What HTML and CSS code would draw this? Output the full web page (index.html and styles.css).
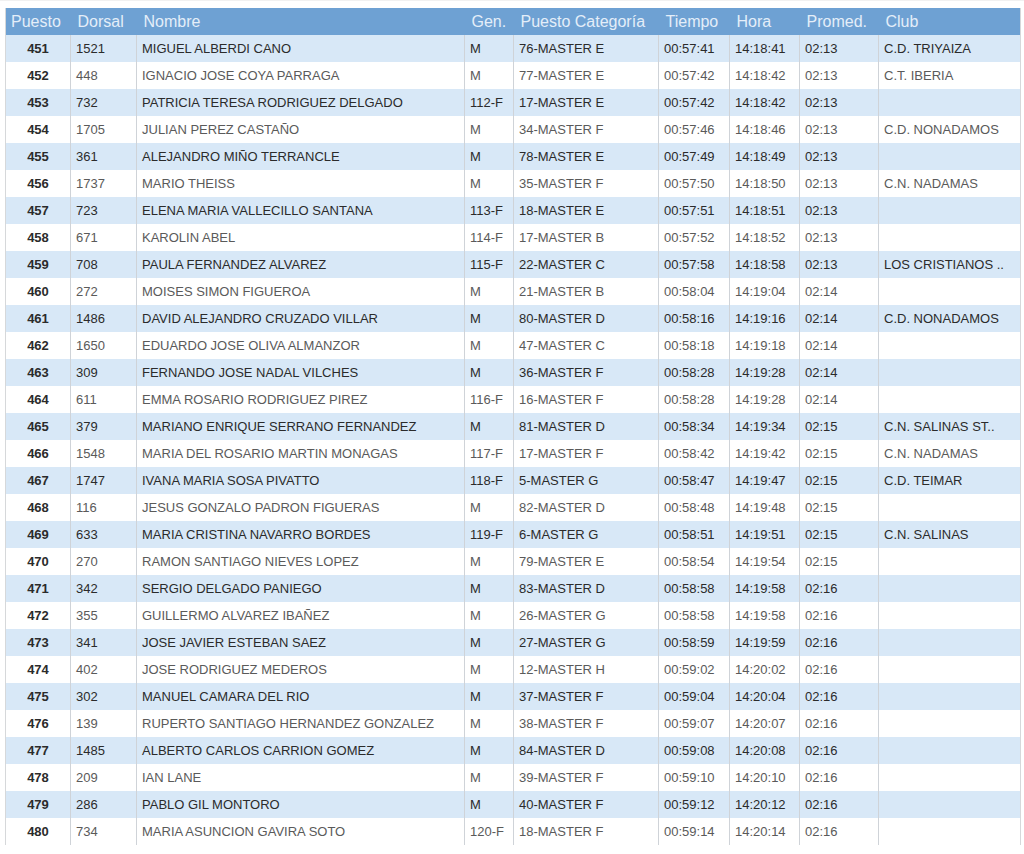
FILE: index.html
```html
<!DOCTYPE html>
<html lang="es">
<head>
<meta charset="utf-8">
<title>Clasificación</title>
<link rel="stylesheet" href="styles.css">
</head>
<body>
<div class="wrap">
<table class="results">
<colgroup>
<col class="c-pos"><col class="c-dor"><col class="c-nom"><col class="c-gen"><col class="c-cat"><col class="c-tie"><col class="c-hor"><col class="c-pro"><col class="c-club">
</colgroup>
<thead>
<tr><th class="h-pos">Puesto</th><th>Dorsal</th><th>Nombre</th><th>Gen.</th><th>Puesto Categoría</th><th>Tiempo</th><th>Hora</th><th>Promed.</th><th>Club</th></tr>
</thead>
<tbody>
<tr><td class="pos">451</td><td>1521</td><td>MIGUEL ALBERDI CANO</td><td>M</td><td>76-MASTER E</td><td>00:57:41</td><td>14:18:41</td><td>02:13</td><td>C.D. TRIYAIZA</td></tr>
<tr><td class="pos">452</td><td>448</td><td>IGNACIO JOSE COYA PARRAGA</td><td>M</td><td>77-MASTER E</td><td>00:57:42</td><td>14:18:42</td><td>02:13</td><td>C.T. IBERIA</td></tr>
<tr><td class="pos">453</td><td>732</td><td>PATRICIA TERESA RODRIGUEZ DELGADO</td><td>112-F</td><td>17-MASTER E</td><td>00:57:42</td><td>14:18:42</td><td>02:13</td><td></td></tr>
<tr><td class="pos">454</td><td>1705</td><td>JULIAN PEREZ CASTAÑO</td><td>M</td><td>34-MASTER F</td><td>00:57:46</td><td>14:18:46</td><td>02:13</td><td>C.D. NONADAMOS</td></tr>
<tr><td class="pos">455</td><td>361</td><td>ALEJANDRO MIÑO TERRANCLE</td><td>M</td><td>78-MASTER E</td><td>00:57:49</td><td>14:18:49</td><td>02:13</td><td></td></tr>
<tr><td class="pos">456</td><td>1737</td><td>MARIO THEISS</td><td>M</td><td>35-MASTER F</td><td>00:57:50</td><td>14:18:50</td><td>02:13</td><td>C.N. NADAMAS</td></tr>
<tr><td class="pos">457</td><td>723</td><td>ELENA MARIA VALLECILLO SANTANA</td><td>113-F</td><td>18-MASTER E</td><td>00:57:51</td><td>14:18:51</td><td>02:13</td><td></td></tr>
<tr><td class="pos">458</td><td>671</td><td>KAROLIN ABEL</td><td>114-F</td><td>17-MASTER B</td><td>00:57:52</td><td>14:18:52</td><td>02:13</td><td></td></tr>
<tr><td class="pos">459</td><td>708</td><td>PAULA FERNANDEZ ALVAREZ</td><td>115-F</td><td>22-MASTER C</td><td>00:57:58</td><td>14:18:58</td><td>02:13</td><td>LOS CRISTIANOS ..</td></tr>
<tr><td class="pos">460</td><td>272</td><td>MOISES SIMON FIGUEROA</td><td>M</td><td>21-MASTER B</td><td>00:58:04</td><td>14:19:04</td><td>02:14</td><td></td></tr>
<tr><td class="pos">461</td><td>1486</td><td>DAVID ALEJANDRO CRUZADO VILLAR</td><td>M</td><td>80-MASTER D</td><td>00:58:16</td><td>14:19:16</td><td>02:14</td><td>C.D. NONADAMOS</td></tr>
<tr><td class="pos">462</td><td>1650</td><td>EDUARDO JOSE OLIVA ALMANZOR</td><td>M</td><td>47-MASTER C</td><td>00:58:18</td><td>14:19:18</td><td>02:14</td><td></td></tr>
<tr><td class="pos">463</td><td>309</td><td>FERNANDO JOSE NADAL VILCHES</td><td>M</td><td>36-MASTER F</td><td>00:58:28</td><td>14:19:28</td><td>02:14</td><td></td></tr>
<tr><td class="pos">464</td><td>611</td><td>EMMA ROSARIO RODRIGUEZ PIREZ</td><td>116-F</td><td>16-MASTER F</td><td>00:58:28</td><td>14:19:28</td><td>02:14</td><td></td></tr>
<tr><td class="pos">465</td><td>379</td><td>MARIANO ENRIQUE SERRANO FERNANDEZ</td><td>M</td><td>81-MASTER D</td><td>00:58:34</td><td>14:19:34</td><td>02:15</td><td>C.N. SALINAS ST..</td></tr>
<tr><td class="pos">466</td><td>1548</td><td>MARIA DEL ROSARIO MARTIN MONAGAS</td><td>117-F</td><td>17-MASTER F</td><td>00:58:42</td><td>14:19:42</td><td>02:15</td><td>C.N. NADAMAS</td></tr>
<tr><td class="pos">467</td><td>1747</td><td>IVANA MARIA SOSA PIVATTO</td><td>118-F</td><td>5-MASTER G</td><td>00:58:47</td><td>14:19:47</td><td>02:15</td><td>C.D. TEIMAR</td></tr>
<tr><td class="pos">468</td><td>116</td><td>JESUS GONZALO PADRON FIGUERAS</td><td>M</td><td>82-MASTER D</td><td>00:58:48</td><td>14:19:48</td><td>02:15</td><td></td></tr>
<tr><td class="pos">469</td><td>633</td><td>MARIA CRISTINA NAVARRO BORDES</td><td>119-F</td><td>6-MASTER G</td><td>00:58:51</td><td>14:19:51</td><td>02:15</td><td>C.N. SALINAS</td></tr>
<tr><td class="pos">470</td><td>270</td><td>RAMON SANTIAGO NIEVES LOPEZ</td><td>M</td><td>79-MASTER E</td><td>00:58:54</td><td>14:19:54</td><td>02:15</td><td></td></tr>
<tr><td class="pos">471</td><td>342</td><td>SERGIO DELGADO PANIEGO</td><td>M</td><td>83-MASTER D</td><td>00:58:58</td><td>14:19:58</td><td>02:16</td><td></td></tr>
<tr><td class="pos">472</td><td>355</td><td>GUILLERMO ALVAREZ IBAÑEZ</td><td>M</td><td>26-MASTER G</td><td>00:58:58</td><td>14:19:58</td><td>02:16</td><td></td></tr>
<tr><td class="pos">473</td><td>341</td><td>JOSE JAVIER ESTEBAN SAEZ</td><td>M</td><td>27-MASTER G</td><td>00:58:59</td><td>14:19:59</td><td>02:16</td><td></td></tr>
<tr><td class="pos">474</td><td>402</td><td>JOSE RODRIGUEZ MEDEROS</td><td>M</td><td>12-MASTER H</td><td>00:59:02</td><td>14:20:02</td><td>02:16</td><td></td></tr>
<tr><td class="pos">475</td><td>302</td><td>MANUEL CAMARA DEL RIO</td><td>M</td><td>37-MASTER F</td><td>00:59:04</td><td>14:20:04</td><td>02:16</td><td></td></tr>
<tr><td class="pos">476</td><td>139</td><td>RUPERTO SANTIAGO HERNANDEZ GONZALEZ</td><td>M</td><td>38-MASTER F</td><td>00:59:07</td><td>14:20:07</td><td>02:16</td><td></td></tr>
<tr><td class="pos">477</td><td>1485</td><td>ALBERTO CARLOS CARRION GOMEZ</td><td>M</td><td>84-MASTER D</td><td>00:59:08</td><td>14:20:08</td><td>02:16</td><td></td></tr>
<tr><td class="pos">478</td><td>209</td><td>IAN LANE</td><td>M</td><td>39-MASTER F</td><td>00:59:10</td><td>14:20:10</td><td>02:16</td><td></td></tr>
<tr><td class="pos">479</td><td>286</td><td>PABLO GIL MONTORO</td><td>M</td><td>40-MASTER F</td><td>00:59:12</td><td>14:20:12</td><td>02:16</td><td></td></tr>
<tr><td class="pos">480</td><td>734</td><td>MARIA ASUNCION GAVIRA SOTO</td><td>120-F</td><td>18-MASTER F</td><td>00:59:14</td><td>14:20:14</td><td>02:16</td><td></td></tr>
</tbody>
</table>
</div>
</body>
</html>
```

FILE: styles.css
```css
html, body {
  margin: 0;
  padding: 0;
  background: #ffffff;
}

.wrap {
  padding: 7px 4px 0 5px;
  border-top: 1px solid #f1f1f1;
  box-sizing: border-box;
  width: 1024px;
}

.results {
  width: 1015px;
  table-layout: fixed;
  border-collapse: collapse;
  font-family: "Liberation Sans", Arial, sans-serif;
  font-size: 13px;
  border-left: 1px solid #d6d8da;
  border-right: 1px solid #d6d8da;
}

.c-pos { width: 65px; }
.c-dor { width: 66px; }
.c-nom { width: 328px; }
.c-gen { width: 49px; }
.c-cat { width: 145px; }
.c-tie { width: 71px; }
.c-hor { width: 70px; }
.c-pro { width: 79px; }
.c-club { width: 142px; }

.results thead th {
  background: #6ea1d3;
  color: #e4eef9;
  font-weight: normal;
  font-size: 16px;
  text-align: left;
  height: 27px;
  padding: 0 0 0 7px;
  white-space: nowrap;
  overflow: hidden;
  border: none;
}

.results thead th.h-pos {
  padding-left: 5px;
}

.results tbody td {
  height: 27px;
  padding: 0 0 0 5px;
  color: #5a5a5a;
  white-space: nowrap;
  overflow: hidden;
  border-left: 1px solid #cfd3d8;
  border-right: 1px solid #cfd3d8;
  vertical-align: middle;
}

.results tbody tr:nth-child(odd) td {
  background: #d8e8f7;
  color: #2b2b2b;
}

.results tbody td.pos {
  text-align: center;
  font-weight: bold;
  color: #2b2b2b;
  padding: 0;
  border-left: none;
}

.results tbody td:last-child {
  border-right: none;
}
```
